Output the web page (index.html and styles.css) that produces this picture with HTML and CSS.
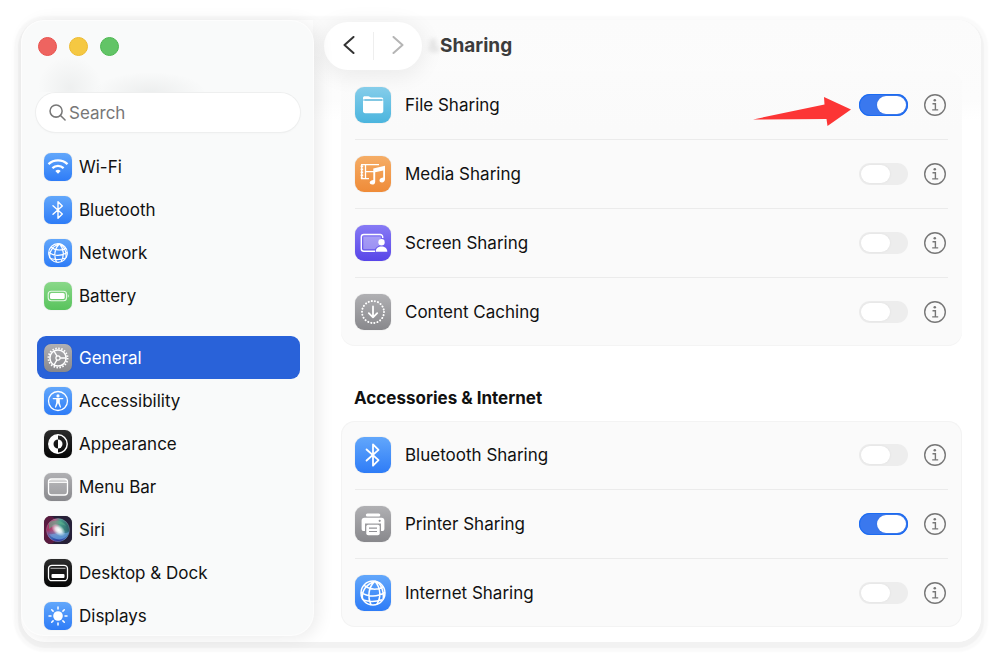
FILE: index.html
```html
<!DOCTYPE html>
<html lang="en">
<head>
  <meta charset="UTF-8">
  <meta name="viewport" content="width=device-width, initial-scale=1.0">
  <title>Sharing</title>
  <link rel="stylesheet" href="styles.css">
</head>
<body>
  <!-- shared glyphs -->
  <svg class="sprite" aria-hidden="true">
    <symbol id="bluetooth" viewBox="0 0 28 28">
      <path d="M9 9.7 18.3 18 14 22.3V5.7L18.3 10 9 18.3" fill="none" stroke="#fff" stroke-width="1.4" stroke-linejoin="round" stroke-linecap="round"/>
    </symbol>
    <symbol id="globe" viewBox="0 0 28 28">
      <g fill="none" stroke="#fff" stroke-width="1.2">
        <circle cx="14" cy="14" r="9.3"/>
        <path d="M15.500 4.800c-5 4.500-6 12-3 18.400M15.500 4.800c-7 2.500-11 8-9.500 14.500M15.500 4.800c4.500 5 5 12.500 1.500 18M15.500 4.800c4 1 7 6 6.500 14M7 8c4 3.500 10 4 15 1.200M4.700 13.500c5 3.500 12.500 4 18.600 0M6.500 19.500c4.500 1.500 9.500 1.500 14.500-.2"/>
      </g>
    </symbol>
    <symbol id="info" viewBox="0 0 22 22">
      <circle cx="11" cy="11" r="10.3" fill="none" stroke="#777" stroke-width="1.4"/>
      <circle cx="10.8" cy="6.300" r="1.3" fill="#777"/>
      <path d="M8.500 9.700h2.900v6M8.200 15.900h6" fill="none" stroke="#777" stroke-width="1.4"/>
    </symbol>
  </svg>

  <div class="window">
    <aside class="sidebar">
      <div class="lights">
        <button class="light red" aria-label="Close"></button>
        <button class="light yellow" aria-label="Minimize"></button>
        <button class="light green" aria-label="Zoom"></button>
      </div>

      <label class="search">
        <svg viewBox="0 0 18 18" aria-hidden="true"><circle cx="7.5" cy="7.5" r="6.4"/><path d="m12.2 12.2 4.8 4.8"/></svg>
        <input type="search" placeholder="Search" aria-label="Search">
      </label>

      <nav class="nav">
        <a href="#" class="item">
          <span class="icon blue"><svg viewBox="0 0 28 28"><g fill="none" stroke="#fff" stroke-width="2.3"><path d="M4.500 11.200c5.300-5 13.700-5 19 0M8.400 15.200c3.200-3 8-3 11.200 0"/></g><path d="M14 20.800 11.300 18a4 4 0 0 1 5.400 0z" fill="#fff"/></svg></span>
          Wi-Fi
        </a>
        <a href="#" class="item"><span class="icon blue"><svg><use href="#bluetooth"/></svg></span>Bluetooth</a>
        <a href="#" class="item"><span class="icon blue"><svg><use href="#globe"/></svg></span>Network</a>
        <a href="#" class="item">
          <span class="icon lime"><svg viewBox="0 0 28 28"><rect x="4.2" y="9.2" width="18.3" height="9.6" rx="3" fill="none" stroke="#e4f7e4" stroke-width="1.1"/><rect x="6" y="11" width="14.7" height="6" rx="1.5" fill="#fff"/><path d="M23.800 12.200v3.600c1.300-.6 1.300-3 0-3.600z" fill="#e4f7e4"/></svg></span>
          Battery
        </a>

        <a href="#" class="item group selected" aria-current="page">
          <span class="icon gray"><svg viewBox="0 0 28 28"><g fill="none" stroke="#fff"><circle cx="14" cy="14" r="9.6" stroke-width="1.8" stroke-dasharray="1.5 1.515"/><circle cx="14" cy="14" r="8.1" stroke-width="1.5"/><circle cx="14" cy="14" r="2.1" stroke-width="1.2"/><path d="M16.100 14h5.800M13 12.100 10 7M13 15.900 10 21" stroke-width="1.4"/></g></svg></span>
          General
        </a>
        <a href="#" class="item">
          <span class="icon blue"><svg viewBox="0 0 28 28"><circle cx="14" cy="14" r="9.5" fill="none" stroke="#fff" stroke-width="1.3"/><circle cx="14" cy="8.9" r="1.6" fill="#fff"/><path d="M9.300 11.600h9.400" stroke="#fff" stroke-width="1.400" stroke-linecap="round"/><path d="M12.200 11.500h3.600v4.200l1.300 4.500-1 .5-2.100-4.800-2.100 4.800-1-.5 1.300-4.500z" fill="#fff"/></svg></span>
          Accessibility
        </a>
        <a href="#" class="item">
          <span class="icon black"><svg viewBox="0 0 28 28"><circle cx="14" cy="14" r="9.2" fill="none" stroke="#fff" stroke-width="1.5"/><path d="M14 4.800a9.200 9.200 0 0 0 0 18.400v-4.700a4.500 4.500 0 0 1 0-9z" fill="#fff"/><path d="M14 9.500a4.500 4.500 0 0 1 0 9z" fill="#fff"/></svg></span>
          Appearance
        </a>
        <a href="#" class="item">
          <span class="icon gray"><svg viewBox="0 0 28 28"><rect x="4.5" y="6" width="19" height="16" rx="3" fill="#fff" fill-opacity=".15" stroke="#fff" stroke-width="1.3"/><path d="M5 9.400h18" stroke="#fff" stroke-width="1"/><path d="M5.500 7.800h17" stroke="#fff" stroke-opacity=".45" stroke-width="2"/></svg></span>
          Menu Bar
        </a>
        <a href="#" class="item">
          <span class="icon black"><svg viewBox="0 0 28 28">
            <defs>
              <linearGradient id="siri-base" x1="0" y1="0" x2="1" y2="0"><stop offset="0" stop-color="#a12a5c"/><stop offset=".38" stop-color="#b56088"/><stop offset=".6" stop-color="#4a9e8c"/><stop offset="1" stop-color="#285f66"/></linearGradient>
              <linearGradient id="siri-floor" x1="0" y1="0" x2="0" y2="1"><stop offset=".5" stop-color="#4a8fd8" stop-opacity="0"/><stop offset=".85" stop-color="#3a68b4"/><stop offset="1" stop-color="#2a2590"/></linearGradient>
              <radialGradient id="siri-glow"><stop offset="0" stop-color="#fff"/><stop offset=".4" stop-color="#fff" stop-opacity=".8"/><stop offset="1" stop-color="#fff" stop-opacity="0"/></radialGradient>
            </defs>
            <rect width="28" height="28" rx="7" fill="#262038"/>
            <rect width="12" height="28" rx="7" fill="#7c1744" opacity=".6"/>
            <circle cx="14" cy="14" r="11.5" fill="url(#siri-base)"/>
            <circle cx="14" cy="14" r="11.5" fill="url(#siri-floor)"/>
            <circle cx="14" cy="14" r="11.5" fill="none" stroke="#b9b3d4" stroke-opacity=".35" stroke-width=".8"/>
            <path d="M5 7c5-4 13-3 17 3-6-3-11-2-17 3z" fill="#5fb68c" opacity=".55"/>
            <path d="M5 18c5 1 10-2 12-3 2 2 4 3 8 1-3 9-14 10-20 2z" fill="#78aeea" opacity=".55"/>
            <ellipse cx="14.5" cy="14" rx="8" ry="5" fill="url(#siri-glow)" transform="rotate(38 14.5 14)"/>
          </svg></span>
          Siri
        </a>
        <a href="#" class="item">
          <span class="icon black"><svg viewBox="0 0 28 28"><rect x="4.5" y="6.3" width="19" height="15.4" rx="3.5" fill="none" stroke="#fff" stroke-width="1.3"/><path d="M6.500 9.300h15" stroke="#bbb" stroke-width="1"/><rect x="7.5" y="15" width="13" height="4" rx="1" fill="#fff"/></svg></span>
          Desktop &amp; Dock
        </a>
        <a href="#" class="item">
          <span class="icon blue"><svg viewBox="0 0 28 28"><circle cx="14" cy="14" r="4.8" fill="#fff"/><path d="M14 5v2M14 21v2M5 14h2M21 14h2M7.700 7.700l1.400 1.400M18.900 18.900l1.400 1.400M20.300 7.700l-1.400 1.400M9.100 18.900l-1.400 1.400" stroke="#fff" stroke-width="1.5" stroke-linecap="round"/></svg></span>
          Displays
        </a>
      </nav>
    </aside>

    <main class="main">
      <header class="toolbar">
        <div class="history">
          <button aria-label="Back"><svg viewBox="0 0 12 18"><path d="m10.500 1-9 8 9 8"/></svg></button>
          <button class="forward" aria-label="Forward" disabled><svg viewBox="0 0 12 18"><path d="m1.500 1 9 8-9 8"/></svg></button>
        </div>
        <h1>Sharing</h1>
      </header>

      <div class="content">
        <ul class="card">
          <li class="row">
            <span class="icon large sky"><svg viewBox="0 0 36 36"><path d="M8 12.500V11c0-1.200.7-1.800 1.800-1.800h3.500c1.500 0 1.700 1.300 3 1.300h10c1.300 0 2 .7 2 2z" fill="#fff"/><path d="M8 13.600h20.300V24c0 1.400-.8 2.200-2.200 2.200H10.200C8.800 26.200 8 25.400 8 24z" fill="#fff"/><path d="M9.500 13h17.500" stroke="#4cabd2" stroke-width="1"/></svg></span>
            <label for="file">File Sharing</label>
            <svg class="arrow" viewBox="0 0 98 30" aria-hidden="true"><path d="M0 22.500 71.500 7.500 71 0 98 12.500 74.500 29l-1-7z"/></svg>
            <input type="checkbox" class="switch" id="file" checked>
            <button class="info" aria-label="About File Sharing"><svg><use href="#info"/></svg></button>
          </li>
          <li class="row">
            <span class="icon large orange"><svg viewBox="0 0 36 36"><g fill="none" stroke="#fff" stroke-width="1.3"><path d="M24 8.700H6.700v14H14M10.500 8.700v14M10.500 15.700H19"/><path d="M6.900 9.500v13" stroke-width="2.6" stroke-dasharray="1.7 1.3"/></g><path d="M18.300 12.500 30 9.800v13.500c0 2-1.400 3.100-3 3.100-1.500 0-2.500-.8-2.500-2 0-2.100 2.300-2.300 3.700-2.800v-7.100l-8 1.800v9.400c0 1.900-1.300 2.900-3 2.900-1.500 0-2.500-.8-2.500-2 0-2.100 2.200-2.300 3.600-2.700z" fill="#fff"/></svg></span>
            <label for="media">Media Sharing</label>
            <input type="checkbox" class="switch" id="media">
            <button class="info" aria-label="About Media Sharing"><svg><use href="#info"/></svg></button>
          </li>
          <li class="row">
            <span class="icon large purple"><svg viewBox="0 0 36 36"><path d="M20 26.300H8.800a2.500 2.500 0 0 1-2.500-2.500V12a2.500 2.500 0 0 1 2.500-2.500h16.400a2.500 2.500 0 0 1 2.500 2.500v1" fill="none" stroke="#fff" stroke-width="1.4"/><path d="M8.300 11.500h17.500V14c-3 1.500-3 4.500-1 6.500-2 .5-4 2-4.800 3.800H8.300z" fill="#fff" opacity=".35"/><circle cx="26.5" cy="17.3" r="3.2" fill="#fff"/><path d="M20.700 26.700c0-3.500 2.700-5.200 5.800-5.200s5.800 1.700 5.800 5.200z" fill="#fff"/></svg></span>
            <label for="screen">Screen Sharing</label>
            <input type="checkbox" class="switch" id="screen">
            <button class="info" aria-label="About Screen Sharing"><svg><use href="#info"/></svg></button>
          </li>
          <li class="row">
            <span class="icon large gray"><svg viewBox="0 0 36 36"><circle cx="18" cy="18" r="11" fill="none" stroke="#fff" stroke-width="2" stroke-linecap="round" stroke-dasharray="0.1 3.042"/><path d="M18 12.500v10.800M13.800 19.200l4.200 4.200 4.200-4.200" fill="none" stroke="#fff" stroke-width="1.8" stroke-linecap="round" stroke-linejoin="round"/></svg></span>
            <label for="caching">Content Caching</label>
            <input type="checkbox" class="switch" id="caching">
            <button class="info" aria-label="About Content Caching"><svg><use href="#info"/></svg></button>
          </li>
        </ul>

        <h2>Accessories &amp; Internet</h2>
        <ul class="card">
          <li class="row">
            <span class="icon large blue"><svg><use href="#bluetooth"/></svg></span>
            <label for="bt">Bluetooth Sharing</label>
            <input type="checkbox" class="switch" id="bt">
            <button class="info" aria-label="About Bluetooth Sharing"><svg><use href="#info"/></svg></button>
          </li>
          <li class="row">
            <span class="icon large gray"><svg viewBox="0 0 36 36"><rect x="10.8" y="7.5" width="14.5" height="3" rx="1.5" fill="#fff"/><path d="M9.500 11.800h17c1.900 0 2.900 1 2.900 2.900v8c0 1.500-.7 2.300-2.400 2.300h-1v-7.500H10V25H9c-1.700 0-2.400-.8-2.400-2.300v-8c0-1.900 1-2.900 2.900-2.900z" fill="#fff"/><circle cx="24.7" cy="14.800" r="1.1" fill="#929297"/><rect x="11.3" y="18.700" width="13.4" height="10.5" rx="1.8" fill="#fff"/><path d="M14 22.200h8M14 25.500h8" stroke="#929297" stroke-width="1.2"/></svg></span>
            <label for="printer">Printer Sharing</label>
            <input type="checkbox" class="switch" id="printer" checked>
            <button class="info" aria-label="About Printer Sharing"><svg><use href="#info"/></svg></button>
          </li>
          <li class="row">
            <span class="icon large blue"><svg><use href="#globe"/></svg></span>
            <label for="internet">Internet Sharing</label>
            <input type="checkbox" class="switch" id="internet">
            <button class="info" aria-label="About Internet Sharing"><svg><use href="#info"/></svg></button>
          </li>
        </ul>
      </div>
    </main>
  </div>
</body>
</html>
```
FILE: styles.css
```css
* {
  box-sizing: border-box;
}

body {
  margin: 0;
  padding: 20px 19px 19px 21px;
  background: #fff;
  color: #111;
  font-family: Inter, "Liberation Sans", sans-serif;
  font-size: 17px;
  line-height: 22px;
}

button {
  padding: 0;
  border: none;
  background: none;
}

.sprite {
  display: none;
}

.window {
  display: flex;
  border-radius: 24px;
  background: #fff;
  box-shadow: 0 3px 1px 3px #f2f2f2, 0 3px 2px 7px #fafafa;
}

/* sidebar */
.sidebar {
  display: flex;
  flex-direction: column;
  flex: none;
  width: 291px;
  margin: 1px 0 7px 1px;
  padding-top: 16px;
  border-radius: 22px;
  background: #f9fafa;
  box-shadow: 0 0 0 1px #fdfdfd, 4px 2px 18px rgba(0, 0, 0, 0.09);
  z-index: 1;
}

.lights {
  display: flex;
  gap: 12px;
  padding-left: 16px;
}

.light {
  width: 19px;
  height: 19px;
  border-radius: 50%;
}

.red {
  background: #ee6460;
  border: 1px solid #e9504c;
}

.yellow {
  background: #f5c842;
  border: 1px solid #eebb30;
}

.green {
  background: #62c466;
  border: 1px solid #4cb850;
}

.search {
  position: relative;
  display: flex;
  align-items: center;
  gap: 3px;
  height: 39px;
  margin: 37px 13px 13px 14px;
  padding: 0 13px;
  border-radius: 20px;
  background: #fff;
  box-shadow: 0 0 0 1px #eeefef, 0 1px 3px rgba(0, 0, 0, 0.04);
}

/* list rows blurred under the glass */
.search::before {
  content: "";
  position: absolute;
  left: 0;
  bottom: 40px;
  width: 170px;
  height: 36px;
  background:
    radial-gradient(circle at 34px 32px, rgba(90, 100, 100, 0.07), transparent 32px),
    radial-gradient(ellipse 56px 20px at 114px 36px, rgba(90, 100, 100, 0.08), transparent);
}

.search svg {
  flex: none;
  width: 17px;
  height: 17px;
  fill: none;
  stroke: #777;
  stroke-width: 1.6;
  stroke-linecap: round;
}

.search input {
  width: 100%;
  padding: 0;
  border: none;
  outline: none;
  background: none;
  font: inherit;
}

.search input::placeholder {
  color: #777;
}

.nav {
  flex: 1 1 0px;
  min-height: 0;
  overflow: hidden;
  padding: 0 13px 0 15px;
}

.item {
  display: flex;
  align-items: center;
  gap: 7px;
  height: 43px;
  padding-left: 7px;
  border-radius: 9px;
  color: #111;
  text-decoration: none;
}

.item.group {
  margin-top: 19px;
}

.item.selected {
  background: #2962d9;
  color: #fff;
}

/* app tiles */
.icon {
  flex: none;
  width: 28px;
  height: 28px;
  border-radius: 7px;
  box-shadow: 0 0 1px rgba(0, 0, 0, 0.25);
}

.icon svg {
  display: block;
  width: 100%;
  height: 100%;
}

.icon.large {
  width: 36px;
  height: 36px;
  border-radius: 9px;
}

.blue {
  background: linear-gradient(#62a7fb, #2e7cf7);
}

.lime {
  background: linear-gradient(#8ad889, #58c35c);
}

.gray {
  background: linear-gradient(#b0b0b3, #88888c);
}

.black {
  background: linear-gradient(#2c2c2c, #050505);
}

.sky {
  background: linear-gradient(#85cdea, #4bb5de);
}

.orange {
  background: linear-gradient(#f5ad66, #ef8b38);
}

.purple {
  background: linear-gradient(#877bf5, #5845e8);
}

/* main pane */
.main {
  flex: 1;
  min-width: 0;
  border-radius: 0 24px 24px 0;
  background: linear-gradient(#fbfbfb, #fcfcfc 80px, #fff 100px);
}

.toolbar {
  display: flex;
  align-items: center;
  gap: 18px;
  padding: 2px 0 1px 11px;
}

.history {
  display: flex;
  align-items: center;
  width: 98px;
  height: 48px;
  padding-left: 1px;
  border-radius: 24px;
  background: #fff;
  box-shadow: 0 4px 20px 4px rgba(0, 0, 0, 0.06);
}

.history button {
  flex: 1;
  height: 28px;
}

.history .forward {
  border-left: 1px solid #eee;
}

.history svg {
  width: 12px;
  height: 18px;
  fill: none;
  stroke: #333;
  stroke-width: 2;
  stroke-linecap: round;
  stroke-linejoin: round;
}

.history .forward svg {
  stroke: #b5b5b5;
}

h1 {
  position: relative;
  margin: 0;
  color: #3c3c3c;
  font-size: 19px;
  font-weight: 700;
  line-height: 24px;
}

/* heading scrolled behind the toolbar */
h1::before {
  content: "&";
  position: absolute;
  left: -12px;
  color: #ddd;
  font-size: 17px;
  filter: blur(2px);
  z-index: -1;
}

h1 {
  z-index: 0;
}

.content {
  padding: 0 19px 15px 28px;
}

.card {
  margin: 0;
  padding: 0 14px;
  border-radius: 14px;
  background: #fafafa;
  box-shadow: inset 0 0 0 1px #f3f3f3;
  list-style: none;
}

.card:first-child {
  background: linear-gradient(#fbfbfb, #fafafa 60px);
  box-shadow: inset 0 -1px 0 #f4f4f4;
}

.row {
  position: relative;
  display: flex;
  align-items: center;
  gap: 16px;
  min-height: 68px;
  padding-right: 2px;
}

.row + .row {
  border-top: 1px solid #ebebeb;
  min-height: 69px;
}

.row .icon {
  margin-right: -2px;
}

.row label {
  flex: 1;
}

.switch {
  appearance: none;
  flex: none;
  width: 49px;
  height: 22px;
  margin: 0;
  padding: 2px;
  border-radius: 11px;
  background: #ededed;
}

.switch::before {
  content: "";
  display: block;
  width: 29px;
  height: 18px;
  border-radius: 9px;
  background: #fff;
  box-shadow: 0 0 3px rgba(0, 0, 0, 0.06);
}

.switch:checked {
  background: #3a78ee;
  box-shadow: inset 0 0 0 1px #1c6cf2;
}

.switch:checked::before {
  margin-left: auto;
}

.info {
  flex: none;
  width: 22px;
  height: 22px;
}

.info svg {
  display: block;
  width: 22px;
  height: 22px;
}

/* red pointer drawn over the row */
.arrow {
  position: absolute;
  right: 97px;
  top: 26px;
  width: 98px;
  height: 30px;
  fill: #fc3535;
}

h2 {
  margin: 41px 13px 12px;
  font-size: 17px;
  font-weight: 700;
}
```
